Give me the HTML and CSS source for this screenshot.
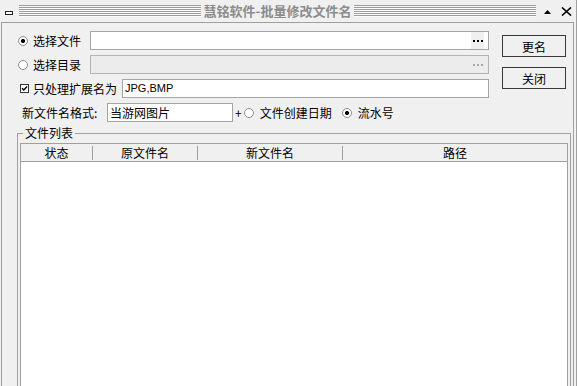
FILE: index.html
```html
<!DOCTYPE html>
<html lang="zh-CN">
<head>
  <meta charset="UTF-8" />
  <title>慧铭软件-批量修改文件名</title>
  <link rel="stylesheet" href="styles.css">
</head>
<body>
  <div class="window">
    <div class="titlebar">
      <span class="sysicon"></span>
      <span class="stripes"></span>
      <span class="title">慧铭软件-批量修改文件名</span>
      <span class="stripes"></span>
      <svg class="tb-up" width="7" height="4" viewBox="0 0 7 4"><path d="M0 4 L3.5 0 L7 4 Z" fill="#000"/></svg>
      <svg class="tb-close" width="11" height="9" viewBox="0 0 11 9"><path d="M1 0.5 L10 8.5 M10 0.5 L1 8.5" stroke="#000" stroke-width="1.6"/></svg>
    </div>

    <div class="frame">
      <div class="top">
        <div class="form">
          <div class="row">
            <label class="opt"><span class="radio on"></span>选择文件</label>
            <div class="field"><span class="browse"><svg width="10" height="2" viewBox="0 0 10 2"><rect x="0" width="2" height="2"/><rect x="4" width="2" height="2"/><rect x="8" width="2" height="2"/></svg></span></div>
          </div>
          <div class="row">
            <label class="opt"><span class="radio"></span>选择目录</label>
            <div class="field disabled"><span class="browse"><svg width="10" height="2" viewBox="0 0 10 2"><rect x="0" width="2" height="2"/><rect x="4" width="2" height="2"/><rect x="8" width="2" height="2"/></svg></span></div>
          </div>
          <div class="row">
            <label class="opt chk-opt"><svg class="chk" width="9" height="9" viewBox="0 0 9 9"><rect x="0.5" y="0.5" width="8" height="8" fill="#fff" stroke="#333"/><path d="M2 4.2 L3.8 6 L7 2.6" fill="none" stroke="#000" stroke-width="1.4"/></svg>只处理扩展名为</label>
            <div class="field"><span class="value small">JPG,BMP</span></div>
          </div>
          <div class="row last">
            <span class="lbl">新文件名格式:</span>
            <div class="field name"><span class="value">当游网图片</span></div>
            <span class="plus">+</span>
            <label class="opt-inline"><span class="radio"></span>文件创建日期</label>
            <label class="opt-inline"><span class="radio on"></span>流水号</label>
          </div>
        </div>
        <div class="buttons">
          <button>更名</button>
          <button>关闭</button>
        </div>
      </div>

      <fieldset class="group">
        <legend>文件列表</legend>
        <div class="list">
          <div class="list-head">
            <span class="col c1">状态</span><i class="sep"></i>
            <span class="col c2">原文件名</span><i class="sep"></i>
            <span class="col c3">新文件名</span><i class="sep"></i>
            <span class="col c4">路径</span>
          </div>
        </div>
      </fieldset>
    </div>
  </div>
</body>
</html>
```

FILE: styles.css
```css
* {
  box-sizing: border-box;
}

body {
  margin: 0;
  font-family: "Noto Sans CJK SC", "Noto Sans", sans-serif;
  font-size: 12px;
  color: #000;
  background: #f0f0f0;
}

.window {
  width: 577px;
  height: 386px;
  background: #f0f0f0;
  border-right: 1px solid #a0a0a0;
  display: flex;
  flex-direction: column;
  overflow: hidden;
}

/* title bar */
.titlebar {
  flex: none;
  height: 22px;
  display: flex;
  align-items: center;
  padding: 0 4px 0 5px;
}

.sysicon {
  width: 8px;
  height: 4px;
  border: 1px solid #222;
  background: #fff;
  margin: 3px 6px 0 0;
}

.stripes {
  flex: 1;
  height: 12px;
  background: repeating-linear-gradient(to bottom, #9c9c9c 0 1px, #fbfbfb 1px 2px);
}

.title {
  padding: 0 3px;
  font-size: 13px;
  font-weight: bold;
  color: #8c8c8c;
  line-height: 22px;
}

.tb-up {
  margin: 1px 0 0 8px;
}

.tb-close {
  margin-left: 10px;
}

/* window body */
.frame {
  flex: 1;
  width: 573px;
  margin-left: 1px;
  border: 1px solid #a0a0a0;
  border-bottom: none;
  padding: 8px 2px 0 16px;
  display: flex;
  flex-direction: column;
}

.top {
  display: flex;
}

.form {
  width: 471px;
}

.row {
  display: flex;
  align-items: center;
  height: 19px;
  margin-bottom: 5px;
  line-height: 17px;
}

.row.last {
  margin-bottom: 3px;
}

.opt {
  flex: none;
  width: 72px;
  display: flex;
  align-items: center;
}

.chk-opt {
  width: 104px;
  padding-left: 2px;
}

.chk {
  margin-right: 4px;
}

.radio {
  flex: none;
  width: 10px;
  height: 10px;
  border-radius: 50%;
  border: 1px solid #8e8f8f;
  background: #fff;
  margin-right: 5px;
}

.radio.on {
  background: radial-gradient(circle, #000 0 1.8px, #fff 2.3px);
}

.field {
  flex: 1;
  height: 19px;
  border: 1px solid #a5a5a5;
  background: #fff;
  display: flex;
  align-items: center;
  justify-content: flex-end;
}

.field.disabled {
  background: #ececec;
  border-color: #b4b4b4;
}

.browse {
  width: 13px;
  height: 17px;
  margin-right: 4px;
  background: #f0f0f0;
  display: flex;
  align-items: center;
  justify-content: center;
  fill: #000;
}

.disabled .browse {
  background: transparent;
  fill: #a8a8a8;
}

.value {
  flex: 1;
  padding-left: 2px;
  white-space: nowrap;
}

.value.small {
  font-family: "Liberation Sans", sans-serif;
  font-size: 11px;
  padding-left: 2px;
}

.lbl {
  flex: none;
  width: 89px;
  padding-left: 4px;
}

.field.name {
  flex: none;
  width: 126px;
}

.plus {
  margin: 0 2px 0 2px;
}

.opt-inline {
  display: flex;
  align-items: center;
  margin-right: 10px;
}

.opt-inline .radio {
  margin-right: 6px;
}

.buttons {
  margin-left: 13px;
  padding-top: 4px;
  display: flex;
  flex-direction: column;
  gap: 10px;
}

button {
  width: 64px;
  height: 22px;
  padding: 0;
  border: 1px solid #3a3a3a;
  background: #f0f0f0;
  font: inherit;
  color: #000;
}

/* file list group */
.group {
  margin: 0 0 0 -1px;
  padding: 0 2px 0 2px;
  min-width: 0;
  border: 1px solid #a0a0a0;
  border-bottom: none;
  flex: 1;
}

.group legend {
  margin-left: 3px;
  padding: 0 2px;
  line-height: 16px;
}

.list {
  margin-top: 2px;
  height: 260px;
  border: 1px solid #a0a0a0;
  background: #fff;
}

.list-head {
  display: flex;
  align-items: center;
  height: 18px;
  background: #f0f0f0;
  border-bottom: 1px solid #a0a0a0;
}

.col {
  text-align: center;
  white-space: nowrap;
}

.c1 { width: 71px; }
.c2 { width: 104px; }
.c3 { width: 144px; }
.c4 { flex: 1; }

.sep {
  width: 1px;
  height: 14px;
  background: #a0a0a0;
}
```
